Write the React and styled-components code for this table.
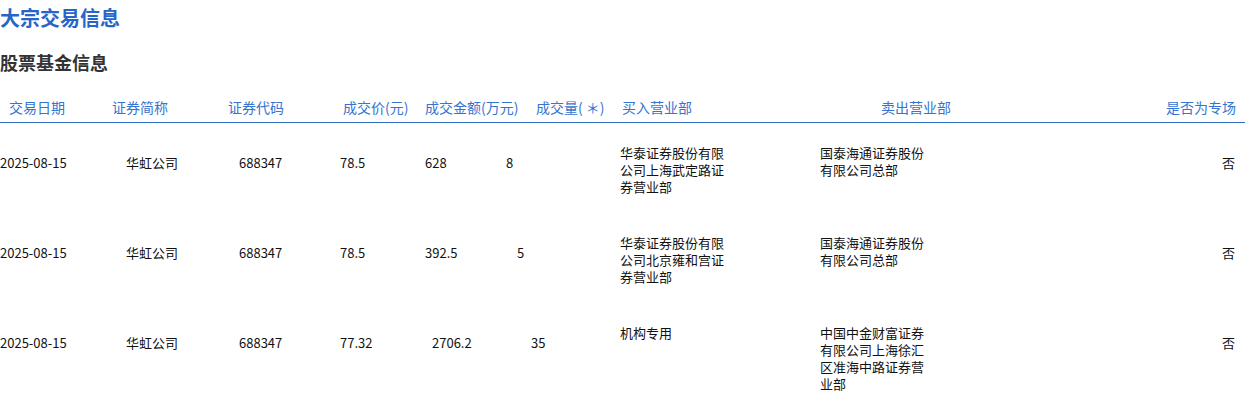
import React from 'react';
import styled, { createGlobalStyle } from 'styled-components';

const GlobalStyle = createGlobalStyle`
  body {
    margin: 0;
    background: #fff;
    font-family: 'Noto Sans CJK SC', 'Noto Sans', sans-serif;
  }
`;

const Page = styled.div`
  width: 1245px;
`;

const Title = styled.h1`
  margin: 0;
  padding-top: 4px;
  font-size: 20px;
  line-height: 28px;
  font-weight: bold;
  color: #2766c8;
`;

const SubTitle = styled.h2`
  margin: 17px 0 0;
  font-size: 18px;
  line-height: 26px;
  font-weight: bold;
  color: #333;
`;

const HeadRow = styled.div`
  display: grid;
  grid-template-columns: 103px 116px 115px 82px 111px 86px 259px 1fr auto;
  margin-top: 22px;
  padding: 0 9px;
  height: 25px;
  border-bottom: 1px solid #2f6cc4;
`;

const HeadCell = styled.div`
  font-size: 14px;
  line-height: 20px;
  color: #3574d0;
  white-space: nowrap;
  text-align: ${(p) => (p.$right ? 'right' : 'left')};
`;

const DataRow = styled.div`
  display: grid;
  grid-template-columns: 126px 113px 101px 85px 75px 120px 200px 1fr auto;
  align-items: start;
  height: 90px;
  padding-right: 10px;
`;

const Cell = styled.div`
  padding-top: 31px;
  padding-left: ${(p) => p.$indent || 0}px;
  font-size: 13px;
  line-height: 17px;
  color: #111;
  white-space: nowrap;
`;

const WrapCell = styled.div`
  padding-top: 21px;
  width: 108px;
  font-size: 13px;
  line-height: 17px;
  color: #111;
`;

const headers = ['交易日期', '证券简称', '证券代码', '成交价(元)', '成交金额(万元)', '成交量( ＊)', '买入营业部', '卖出营业部'];

const rows = [
  {
    date: '2025-08-15', name: '华虹公司', code: '688347', price: '78.5',
    amount: '628', amountIndent: 0, volume: '8', volumeIndent: 6,
    buyer: '华泰证券股份有限公司上海武定路证券营业部',
    seller: '国泰海通证券股份有限公司总部', special: '否',
  },
  {
    date: '2025-08-15', name: '华虹公司', code: '688347', price: '78.5',
    amount: '392.5', amountIndent: 0, volume: '5', volumeIndent: 17,
    buyer: '华泰证券股份有限公司北京雍和宫证券营业部',
    seller: '国泰海通证券股份有限公司总部', special: '否',
  },
  {
    date: '2025-08-15', name: '华虹公司', code: '688347', price: '77.32',
    amount: '2706.2', amountIndent: 7, volume: '35', volumeIndent: 31,
    buyer: '机构专用',
    seller: '中国中金财富证券有限公司上海徐汇区准海中路证券营业部', special: '否',
  },
];

export default function App() {
  return (
    <Page>
      <GlobalStyle />
      <Title>大宗交易信息</Title>
      <SubTitle>股票基金信息</SubTitle>
      <HeadRow>
        {headers.map((h) => (
          <HeadCell key={h}>{h}</HeadCell>
        ))}
        <HeadCell $right>是否为专场</HeadCell>
      </HeadRow>
      {rows.map((r, i) => (
        <DataRow key={i}>
          <Cell>{r.date}</Cell>
          <Cell>{r.name}</Cell>
          <Cell>{r.code}</Cell>
          <Cell>{r.price}</Cell>
          <Cell $indent={r.amountIndent}>{r.amount}</Cell>
          <Cell $indent={r.volumeIndent}>{r.volume}</Cell>
          <WrapCell>{r.buyer}</WrapCell>
          <WrapCell>{r.seller}</WrapCell>
          <Cell>{r.special}</Cell>
        </DataRow>
      ))}
    </Page>
  );
}
